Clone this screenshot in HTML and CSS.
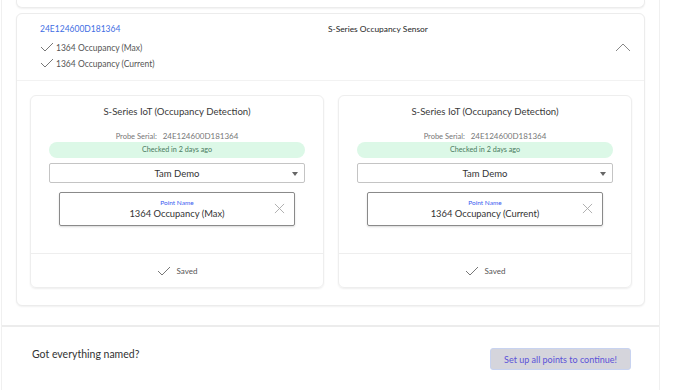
FILE: index.html
```html
<!DOCTYPE html>
<html lang="en">
  <head>
    <meta charset="UTF-8" />
    <meta name="viewport" content="width=device-width, initial-scale=1.0" />
    <title>Name Points</title>
    <link rel="stylesheet" href="styles.css">
  </head>
  <body>
    <div class="page">
      <div class="sensor-list">
        <div class="sensor-card sensor-card-prev"></div>

        <div class="sensor-card">
          <div class="sensor-head">
            <div class="sensor-points">
              <a class="sensor-serial">24E124600D181364</a>
              <div class="point-check">
                <svg class="check" viewBox="0 0 14 10"><polyline points="1,5 5,9 13,1" /></svg>
                <span>1364 Occupancy (Max)</span>
              </div>
              <div class="point-check">
                <svg class="check" viewBox="0 0 14 10"><polyline points="1,5 5,9 13,1" /></svg>
                <span>1364 Occupancy (Current)</span>
              </div>
            </div>
            <div class="sensor-type">S-Series Occupancy Sensor</div>
            <svg class="chevron" viewBox="0 0 16 9"><polyline points="1,8 8,1 15,8" /></svg>
          </div>

          <div class="sensor-body">
            <div class="probe-card">
              <div class="probe-main">
                <h3>S-Series IoT (Occupancy Detection)</h3>
                <div class="probe-serial">Probe Serial:&nbsp;&nbsp; <span>24E124600D181364</span></div>
                <div class="checkin">Checked in 2 days ago</div>
                <div class="select">
                  <span>Tam Demo</span>
                  <i class="caret"></i>
                </div>
                <div class="point-field">
                  <label>Point Name</label>
                  <div class="point-value">1364 Occupancy (Max)</div>
                  <svg class="clear" viewBox="0 0 12 12"><path d="M1 1 L11 11 M11 1 L1 11" /></svg>
                </div>
              </div>
              <div class="probe-foot">
                <svg class="check" viewBox="0 0 14 10"><polyline points="1,5 5,9 13,1" /></svg>
                <span>Saved</span>
              </div>
            </div>

            <div class="probe-card">
              <div class="probe-main">
                <h3>S-Series IoT (Occupancy Detection)</h3>
                <div class="probe-serial">Probe Serial:&nbsp;&nbsp; <span>24E124600D181364</span></div>
                <div class="checkin">Checked in 2 days ago</div>
                <div class="select">
                  <span>Tam Demo</span>
                  <i class="caret"></i>
                </div>
                <div class="point-field">
                  <label>Point Name</label>
                  <div class="point-value">1364 Occupancy (Current)</div>
                  <svg class="clear" viewBox="0 0 12 12"><path d="M1 1 L11 11 M11 1 L1 11" /></svg>
                </div>
              </div>
              <div class="probe-foot">
                <svg class="check" viewBox="0 0 14 10"><polyline points="1,5 5,9 13,1" /></svg>
                <span>Saved</span>
              </div>
            </div>
          </div>
        </div>
      </div>

      <div class="finish">
        <span>Got everything named?</span>
        <button class="continue" disabled>Set up all points to continue!</button>
      </div>
    </div>
  </body>
</html>
```

FILE: styles.css
```css
body {
  margin: 0;
  background: #fff;
  font-family: Lato, "Open Sans", sans-serif;
  color: #333;
}
.page {
  width: 657px;
  margin-left: 1px;
  border-left: 1px solid #f0f0f0;
  border-right: 1px solid #f0f0f0;
  min-height: 390px;
}
.sensor-list {
  padding: 0 14px 19px;
}
.sensor-card {
  border: 1px solid #ececec;
  border-radius: 6px;
  box-shadow: 0 1px 2px rgba(0, 0, 0, 0.06);
  background: #fff;
}
.sensor-card-prev {
  height: 7px;
  border-top: none;
  border-radius: 0 0 6px 6px;
  margin-bottom: 5px;
}
.sensor-head {
  display: grid;
  grid-template-columns: 288px 1fr 16px;
  align-items: center;
  padding: 0 13px 0 23px;
  height: 66px;
  border-bottom: 1px solid #f2f2f2;
}
.sensor-points {
  display: flex;
  flex-direction: column;
  align-self: start;
  padding-top: 9px;
}
.sensor-serial {
  color: #3f6ee4;
  font-size: 8.5px;
  line-height: 12px;
  margin-bottom: 5px;
}
.point-check {
  display: flex;
  align-items: center;
  font-size: 8.5px;
  color: #555;
  height: 16px;
}
.point-check .check {
  margin-right: 2px;
  margin-bottom: 3px;
}
.check {
  width: 14px;
  height: 10px;
  fill: none;
  stroke: #777;
  stroke-width: 1;
}
.sensor-type {
  align-self: start;
  padding-top: 9px;
  font-size: 8.4px;
  line-height: 12px;
  color: #1e1e1e;
}
.chevron {
  width: 16px;
  height: 9px;
  fill: none;
  stroke: #888;
  stroke-width: 1;
}
.sensor-body {
  display: grid;
  grid-template-columns: 294px 294px;
  gap: 14px;
  padding: 14px 13px 17px 13px;
}
.probe-card {
  border: 1px solid #eee;
  border-radius: 6px;
  box-shadow: 0 1px 2px rgba(0, 0, 0, 0.07);
  display: flex;
  flex-direction: column;
}
.probe-main {
  height: 157px;
  display: flex;
  flex-direction: column;
  align-items: center;
  border-bottom: 1px solid #eee;
}
.probe-main h3 {
  margin: 9px 0 0;
  font-size: 9.6px;
  font-weight: normal;
  line-height: 14px;
  color: #3a3a3a;
}
.probe-serial {
  margin-top: 12px;
  font-size: 7.5px;
  line-height: 10px;
  color: #777;
}
.probe-serial span {
  font-size: 8px;
}
.checkin {
  margin-top: 0;
  width: 256px;
  height: 16px;
  line-height: 16px;
  border-radius: 8px;
  background: #dcf8e7;
  color: #4a7a5e;
  font-size: 7.2px;
  text-align: center;
}
.select {
  margin-top: 5px;
  width: 254px;
  height: 18px;
  border: 1px solid #c4c4c4;
  border-radius: 2px;
  display: flex;
  align-items: center;
  justify-content: center;
  position: relative;
  font-size: 9.5px;
  color: #333;
}
.caret {
  position: absolute;
  right: 6px;
  top: 8px;
  border-left: 3px solid transparent;
  border-right: 3px solid transparent;
  border-top: 4px solid #666;
}
.point-field {
  margin-top: 9px;
  width: 234px;
  height: 32px;
  border: 1px solid #8a8a8a;
  border-radius: 2px;
  box-shadow: 0 1px 2px rgba(0, 0, 0, 0.15);
  display: flex;
  flex-direction: column;
  align-items: center;
  justify-content: center;
  position: relative;
}
.point-field label {
  font-size: 6.5px;
  line-height: 8px;
  margin-top: 1px;
  color: #3a5ef0;
}
.point-value {
  font-size: 9.4px;
  line-height: 13px;
  color: #333;
}
.clear {
  position: absolute;
  right: 9px;
  top: 10px;
  width: 11px;
  height: 11px;
  fill: none;
  stroke: #aaa;
  stroke-width: 1;
}
.probe-foot {
  height: 33px;
  display: flex;
  align-items: center;
  justify-content: center;
  gap: 6px;
  font-size: 8px;
  color: #555;
}
.finish {
  border-top: 2px solid #ececec;
  display: flex;
  align-items: flex-start;
  justify-content: space-between;
  padding: 21px 28px 0 30px;
  font-size: 10.5px;
  line-height: 13px;
  color: #333;
}
.continue {
  font-family: inherit;
  font-size: 9px;
  color: #5b52d8;
  background: #d5d5dc;
  border: 1px solid #c8d3f0;
  border-radius: 3px;
  width: 141px;
  height: 22px;
  padding: 0;
}
```
